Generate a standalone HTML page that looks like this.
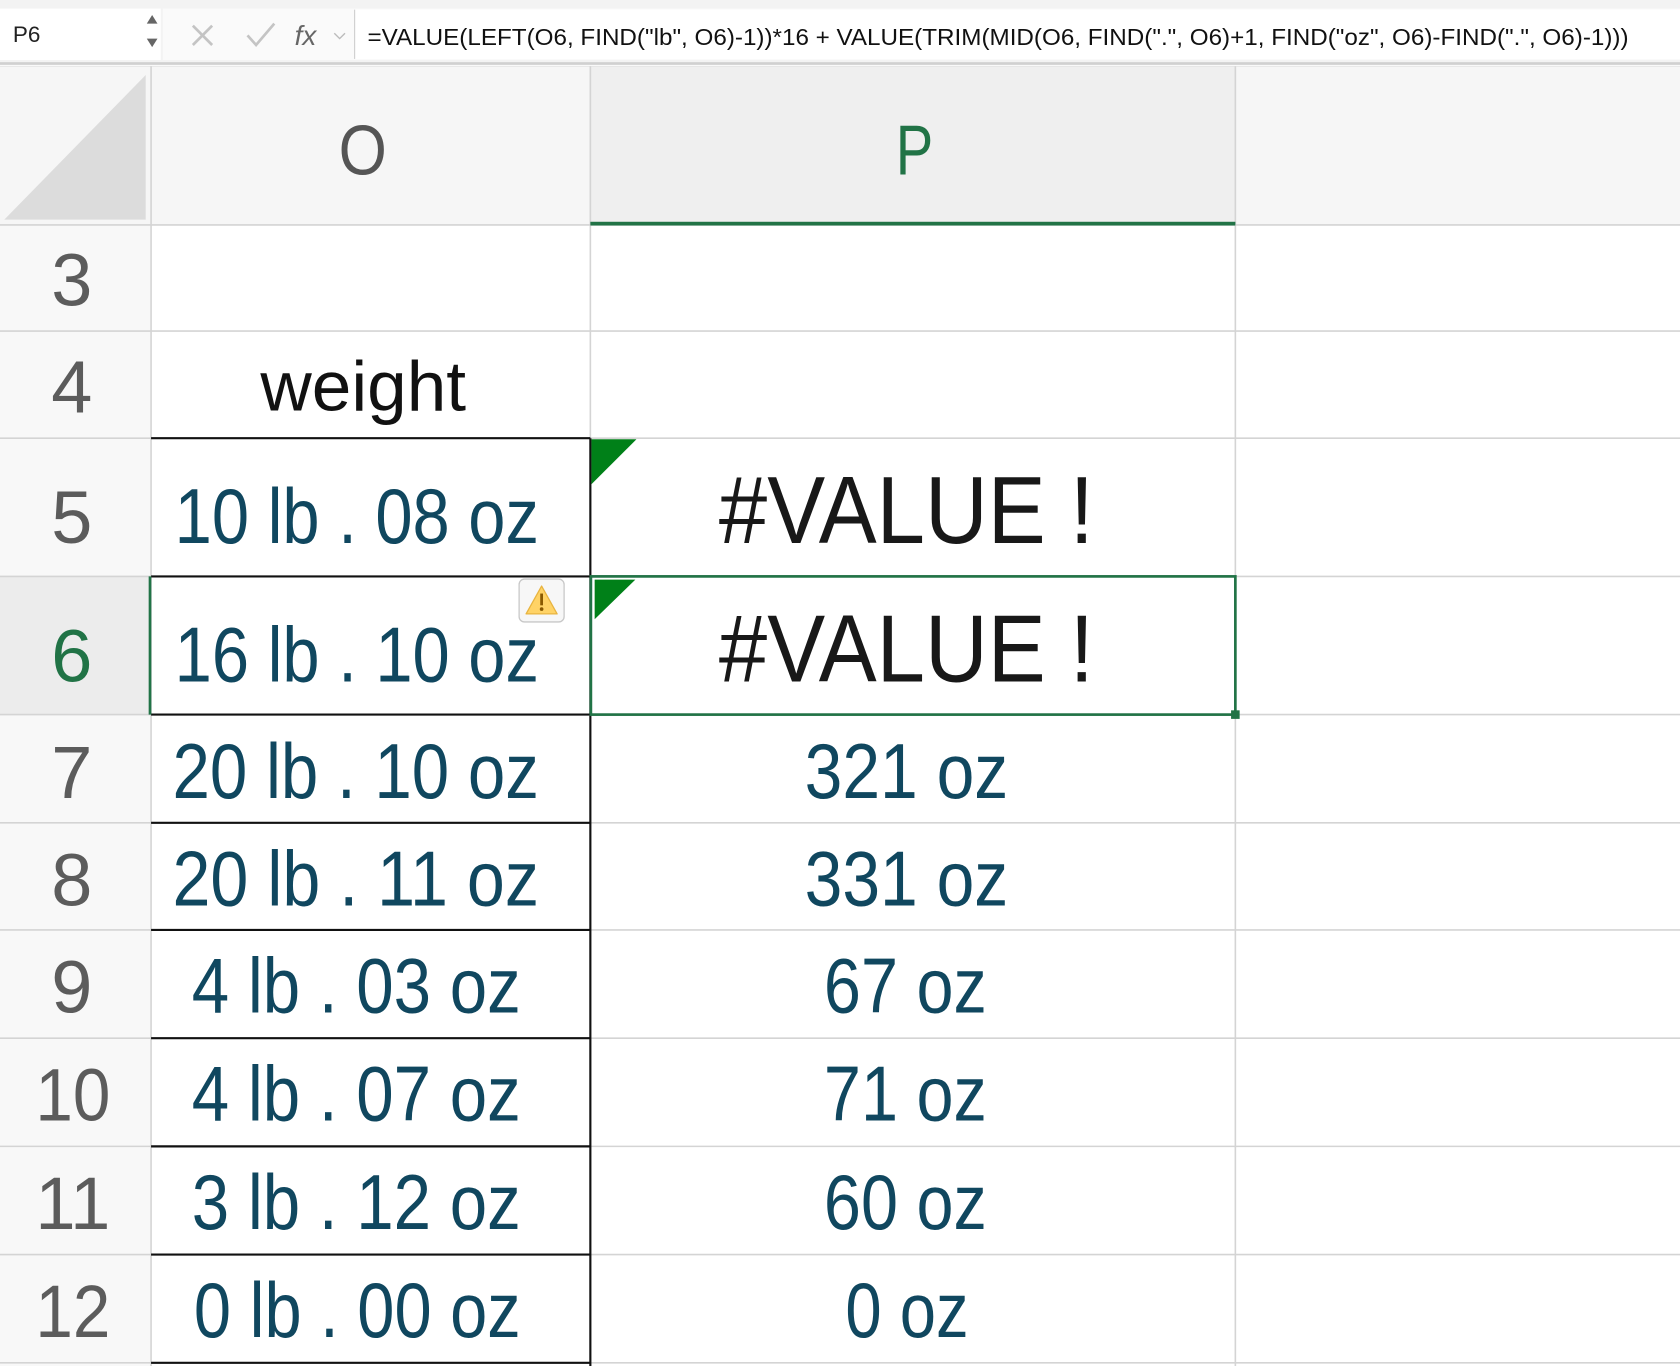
<!DOCTYPE html>
<html><head><meta charset="utf-8"><style>html,body{margin:0;padding:0;background:#fff;overflow:hidden}svg{display:block}text{font-family:"Liberation Sans",sans-serif}</style></head>
<body>
<svg width="1680" height="1366" viewBox="0 0 1568 1275" preserveAspectRatio="none" xmlns="http://www.w3.org/2000/svg">
<rect x="0" y="0" width="1568" height="1275" fill="#fff"/>
<!-- formula bar -->
<rect x="0" y="0" width="1568" height="58" fill="#f3f3f3"/>
<rect x="0" y="8" width="150" height="48" fill="#fff"/>
<text x="12" y="39" font-size="21" fill="#222">P6</text>
<path d="M137 22 L142 14 L147 22Z M137 36 L142 44 L147 36Z" fill="#666"/>
<rect x="152" y="8" width="1416" height="48" fill="#fafafa"/>
<path d="M180 24 L198 42 M198 24 L180 42" stroke="#c4c4c4" stroke-width="2.5"/>
<path d="M231 33 L239 42 L256 22" stroke="#c4c4c4" stroke-width="2.5" fill="none"/>
<text x="275" y="42" font-size="26" font-style="italic" font-family="Liberation Serif" fill="#666">fx</text>
<path d="M312 31 L317 36 L322 31" stroke="#bbb" stroke-width="1.3" fill="none"/>
<rect x="331" y="9" width="1237" height="46" fill="#fff"/>
<line x1="331" y1="9" x2="331" y2="55" stroke="#ccc"/>
<text x="343" y="42" font-size="22" fill="#111" textLength="1177" lengthAdjust="spacingAndGlyphs">=VALUE(LEFT(O6, FIND("lb", O6)-1))*16 + VALUE(TRIM(MID(O6, FIND(".", O6)+1, FIND("oz", O6)-FIND(".", O6)-1)))</text>
<rect x="0" y="58" width="1568" height="4" fill="#d0d0d0"/>
<line x1="0" y1="61" x2="1568" y2="61" stroke="#fff" stroke-width="1"/>
<!-- headers -->
<rect x="0" y="62" width="1568" height="148" fill="#f6f6f6"/>
<rect x="551" y="62" width="602" height="148" fill="#efefef"/>
<path d="M4 205 L136 70 L136 205Z" fill="#dcdcdc"/>
<rect x="0" y="210" width="141" height="1065" fill="#f8f8f8"/>
<rect x="0" y="538" width="141" height="129" fill="#ececec"/>
<!-- gridlines -->
<g stroke="#d4d4d4" stroke-width="1.5">
<line x1="141" y1="62" x2="141" y2="1275"/>
<line x1="551" y1="62" x2="551" y2="1275"/>
<line x1="1153" y1="62" x2="1153" y2="1275"/>
<line x1="0" y1="210" x2="1568" y2="210"/>
<line x1="0" y1="309" x2="1568" y2="309"/>
<line x1="0" y1="409" x2="1568" y2="409"/>
<line x1="0" y1="538" x2="1568" y2="538"/>
<line x1="0" y1="667" x2="1568" y2="667"/>
<line x1="0" y1="768" x2="1568" y2="768"/>
<line x1="0" y1="868" x2="1568" y2="868"/>
<line x1="0" y1="969" x2="1568" y2="969"/>
<line x1="0" y1="1070" x2="1568" y2="1070"/>
<line x1="0" y1="1171" x2="1568" y2="1171"/>
<line x1="0" y1="1272" x2="1568" y2="1272"/>
</g>
<rect x="551" y="207" width="602" height="3.5" fill="#217346"/>
<!-- black borders on O -->
<g stroke="#111" stroke-width="2">
<line x1="141" y1="409" x2="551" y2="409"/>
<line x1="141" y1="538" x2="551" y2="538"/>
<line x1="141" y1="667" x2="551" y2="667"/>
<line x1="141" y1="768" x2="551" y2="768"/>
<line x1="141" y1="868" x2="551" y2="868"/>
<line x1="141" y1="969" x2="551" y2="969"/>
<line x1="141" y1="1070" x2="551" y2="1070"/>
<line x1="141" y1="1171" x2="551" y2="1171"/>
<line x1="141" y1="1272" x2="551" y2="1272"/>
<line x1="551" y1="409" x2="551" y2="1275"/>
</g>
<line x1="140" y1="538" x2="140" y2="667" stroke="#217346" stroke-width="2.5"/>
<!-- header text -->
<text x="316" y="163" font-size="66" fill="#555" textLength="45" lengthAdjust="spacingAndGlyphs">O</text>
<text x="836" y="163" font-size="66" fill="#217346" textLength="35" lengthAdjust="spacingAndGlyphs">P</text>
<!-- row numbers -->
<g font-size="69" fill="#5c5c5c" text-anchor="middle">
<text x="67" y="285">3</text>
<text x="67" y="385">4</text>
<text x="67" y="507">5</text>
<text x="67" y="636" fill="#217346">6</text>
<text x="67" y="745">7</text>
<text x="67" y="845">8</text>
<text x="67" y="945">9</text>
<text x="68" y="1046" textLength="70" lengthAdjust="spacingAndGlyphs">10</text>
<text x="68" y="1147" textLength="70" lengthAdjust="spacingAndGlyphs">11</text>
<text x="68" y="1248" textLength="70" lengthAdjust="spacingAndGlyphs">12</text>
</g>
<text x="243" y="383" font-size="66" fill="#111" textLength="192" lengthAdjust="spacingAndGlyphs">weight</text>
<!-- O values -->
<g font-size="73" fill="#10475f" lengthAdjust="spacingAndGlyphs">
<text x="163" y="507" textLength="340" lengthAdjust="spacingAndGlyphs">10 lb . 08 oz</text>
<text x="163" y="636" textLength="340" lengthAdjust="spacingAndGlyphs">16 lb . 10 oz</text>
<text x="161" y="745" textLength="342" lengthAdjust="spacingAndGlyphs">20 lb . 10 oz</text>
<text x="161" y="845" textLength="342" lengthAdjust="spacingAndGlyphs">20 lb . 11 oz</text>
<text x="179" y="945" textLength="307" lengthAdjust="spacingAndGlyphs">4 lb . 03 oz</text>
<text x="179" y="1046" textLength="307" lengthAdjust="spacingAndGlyphs">4 lb . 07 oz</text>
<text x="179" y="1147" textLength="307" lengthAdjust="spacingAndGlyphs">3 lb . 12 oz</text>
<text x="181" y="1248" textLength="305" lengthAdjust="spacingAndGlyphs">0 lb . 00 oz</text>
<!-- P values -->
<text x="751" y="745" textLength="190" lengthAdjust="spacingAndGlyphs">321 oz</text>
<text x="751" y="845" textLength="190" lengthAdjust="spacingAndGlyphs">331 oz</text>
<text x="769" y="945" textLength="152" lengthAdjust="spacingAndGlyphs">67 oz</text>
<text x="769" y="1046" textLength="152" lengthAdjust="spacingAndGlyphs">71 oz</text>
<text x="769" y="1147" textLength="152" lengthAdjust="spacingAndGlyphs">60 oz</text>
<text x="789" y="1248" textLength="115" lengthAdjust="spacingAndGlyphs">0 oz</text>
</g>
<g font-size="89" fill="#181818">
<text x="671" y="507" textLength="350" lengthAdjust="spacingAndGlyphs">#VALUE !</text>
<text x="671" y="636" textLength="350" lengthAdjust="spacingAndGlyphs">#VALUE !</text>
</g>
<!-- error triangles -->
<path d="M552 410 L594 410 L552 452Z" fill="#008018"/>
<path d="M555 541 L593 541 L555 578Z" fill="#008018"/>
<!-- selection -->
<rect x="551.5" y="538" width="601.5" height="129" fill="none" stroke="#217346" stroke-width="2.5"/>
<rect x="1149" y="663" width="8" height="8" fill="#217346"/>
<!-- warning icon -->
<rect x="484.5" y="540.5" width="42" height="40" rx="5" fill="#f7f7f7" stroke="#c8c8c8" stroke-width="1.2"/>
<path d="M505.5 547 L520 573 L491 573Z" fill="#ffd366" stroke="#e8b440" stroke-width="1.2" stroke-linejoin="round"/>
<rect x="504.2" y="554" width="2.6" height="11" fill="#8a5a00"/>
<circle cx="505.5" cy="568.5" r="1.7" fill="#8a5a00"/>
</svg>
</body></html>
